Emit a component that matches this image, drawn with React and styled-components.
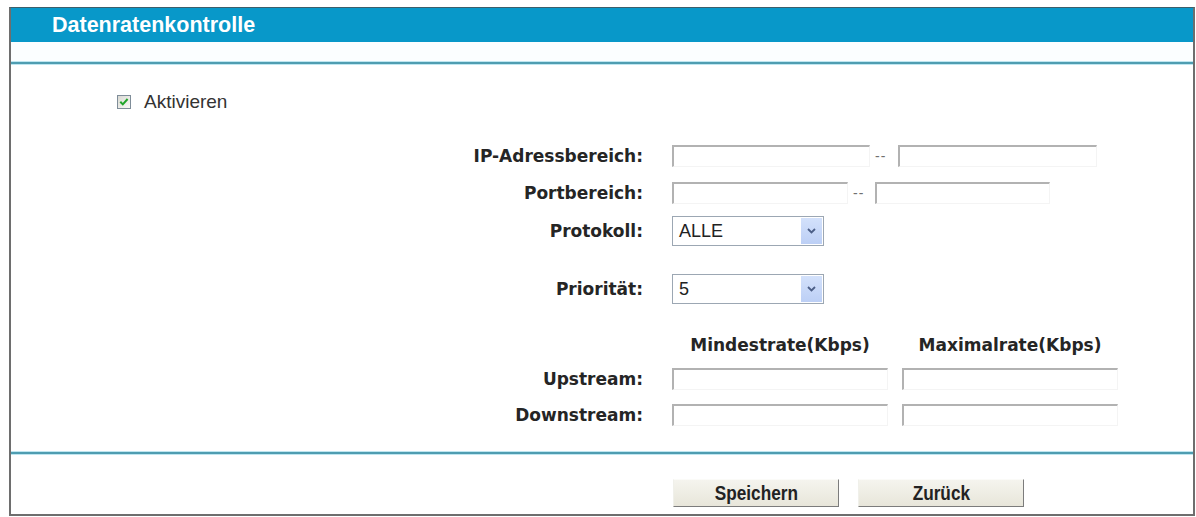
import React from 'react';
import styled, { createGlobalStyle } from 'styled-components';

const GlobalStyle = createGlobalStyle`
  html, body { margin: 0; padding: 0; background: #fff; }
  body { font-family: 'Liberation Sans', Arial, sans-serif; }
`;

const Frame = styled.div`
  box-sizing: border-box;
  width: 1186px;
  height: 509px;
  margin: 7px 0 0 9px;
  border: 2px solid #6e6e6e;
  border-top: 1px solid #3d5f6b;
  display: flex;
  flex-direction: column;
  background: #fff;
`;

const TitleBar = styled.div`
  height: 34px;
  flex-shrink: 0;
  background: #0898c9;
  color: #fff;
  display: flex;
  align-items: center;
  padding-left: 41px;
  font: bold 21.5px 'Liberation Sans', Arial, sans-serif;
`;

const Band = styled.div`
  height: ${p => p.$h || 20}px;
  flex-shrink: 0;
  background: ${p => p.$bg || '#fbfeff'};
`;

// blaue Trennlinie mit hellem Rand
const Rule = styled.div`
  height: 2px;
  flex-shrink: 0;
  background: #4f9db1;
  box-shadow: 0 -1px 0 #bfe6f0, 0 1px 0 #bfe6f0;
`;

const Content = styled.div`
  display: flex;
  flex-direction: column;
  padding-top: 28px;
`;

const CheckRow = styled.label`
  display: flex;
  align-items: center;
  gap: 13px;
  height: 20px;
  padding-left: 106px;
  font-size: 19px;
  color: #333;

  svg { flex-shrink: 0; }
`;

const Row = styled.div`
  display: grid;
  grid-template-columns: 632px 1fr;
  column-gap: 29px;
  align-items: center;
  height: ${p => p.$h || 22}px;
  margin-top: ${p => p.$mt || 0}px;
`;

const Label = styled.div`
  text-align: right;
  font: bold 17px 'DejaVu Sans', Verdana, sans-serif;
  color: #252525;
`;

const Fields = styled.div`
  display: flex;
  align-items: center;
  height: 100%;
`;

const TextInput = styled.input`
  box-sizing: border-box;
  width: ${p => p.$w}px;
  height: 22px;
  margin: 0 ${p => p.$mr || 0}px 0 0;
  padding: 0 4px;
  border-style: solid;
  border-width: 2px 1px 1px 2px;
  border-color: #b2b2b2 #f4f4f4 #f4f4f4 #b2b2b2;
  background: #fff;
  outline: none;
`;

const Dash = styled.span`
  align-self: flex-end;
  margin: 0 ${p => p.$mr}px 3px 5px;
  width: 13px;
  font: 14px 'Liberation Sans', Arial, sans-serif;
  letter-spacing: 1px;
  color: #707070;
`;

const SelectBox = styled.div`
  box-sizing: border-box;
  width: 152px;
  height: 30px;
  display: flex;
  align-items: center;
  border: 1px solid #9ca7b3;
  background: #fff;
  padding-left: 6px;
  font: 18px 'Liberation Sans', Arial, sans-serif;
  color: #222;
`;

const SelectValue = styled.span`
  flex: 1;
`;

const ArrowBox = styled.span`
  width: 21px;
  height: 26px;
  margin: 1px;
  display: flex;
  align-items: center;
  justify-content: center;
  background: linear-gradient(#d3e1fb, #bccff5);
`;

const ColHead = styled.div`
  width: ${p => p.$w}px;
  margin-right: ${p => p.$mr || 0}px;
  text-align: center;
  font: bold 17px 'DejaVu Sans', Verdana, sans-serif;
  color: #252525;
`;

const Footer = styled.div`
  display: flex;
  gap: 19px;
  padding: 25px 0 0 662px;
`;

const Button = styled.button`
  box-sizing: border-box;
  width: 166px;
  height: 28px;
  background: linear-gradient(#f5f4ee, #e8e6da);
  border: 1px solid;
  border-color: #fbfbf8 #7c7c7c #7c7c7c #f0f0ea;
  color: #222;
  padding: 0;
  cursor: pointer;
`;

// schmale Schrift der Schaltflächen
const ButtonText = styled.span`
  display: inline-block;
  font: bold 20px 'Liberation Sans', Arial, sans-serif;
  transform: scaleX(0.86);
`;

const CheckIcon = () => (
  <svg width="14" height="14" viewBox="0 0 14 14">
    <defs>
      <linearGradient id="cbg" x1="0" y1="0" x2="1" y2="1">
        <stop offset="0" stopColor="#d8d8d2" />
        <stop offset="1" stopColor="#fbfbf8" />
      </linearGradient>
    </defs>
    <rect x="0.5" y="0.5" width="13" height="13" fill="url(#cbg)" stroke="#7f8d99" />
    <path d="M3.3 6.8 L5.8 9.4 L10.6 4" fill="none" stroke="#21a52a" strokeWidth="2" />
  </svg>
);

const Chevron = () => (
  <svg width="9" height="6" viewBox="0 0 9 6">
    <path d="M1 1 L4.5 4.5 L8 1" fill="none" stroke="#4c5f87" strokeWidth="1.8" />
  </svg>
);

const Select = ({ value }) => (
  <SelectBox>
    <SelectValue>{value}</SelectValue>
    <ArrowBox><Chevron /></ArrowBox>
  </SelectBox>
);

export default function App() {
  return (
    <>
      <GlobalStyle />
      <Frame>
        <TitleBar>Datenratenkontrolle</TitleBar>
        <Band />
        <Rule />
        <Content>
          <CheckRow>
            <CheckIcon />
            Aktivieren
          </CheckRow>

          <Row $mt={33}>
            <Label>IP-Adressbereich:</Label>
            <Fields>
              <TextInput $w={198} />
              <Dash $mr={10}>--</Dash>
              <TextInput $w={199} />
            </Fields>
          </Row>
          <Row $mt={15}>
            <Label>Portbereich:</Label>
            <Fields>
              <TextInput $w={176} />
              <Dash $mr={9}>--</Dash>
              <TextInput $w={175} />
            </Fields>
          </Row>
          <Row $mt={12} $h={30}>
            <Label>Protokoll:</Label>
            <Fields><Select value="ALLE" /></Fields>
          </Row>
          <Row $mt={28} $h={30}>
            <Label>Priorität:</Label>
            <Fields><Select value="5" /></Fields>
          </Row>
          <Row $mt={31} $h={20}>
            <div />
            <Fields>
              <ColHead $w={216} $mr={14}>Mindestrate(Kbps)</ColHead>
              <ColHead $w={216}>Maximalrate(Kbps)</ColHead>
            </Fields>
          </Row>
          <Row $mt={12} $h={23}>
            <Label>Upstream:</Label>
            <Fields>
              <TextInput $w={216} $mr={14} />
              <TextInput $w={216} />
            </Fields>
          </Row>
          <Row $mt={13} $h={23}>
            <Label>Downstream:</Label>
            <Fields>
              <TextInput $w={216} $mr={14} />
              <TextInput $w={216} />
            </Fields>
          </Row>
        </Content>
        <Band $h={26} $bg="#fff" />
        <Rule />
        <Footer>
          <Button><ButtonText>Speichern</ButtonText></Button>
          <Button><ButtonText>Zurück</ButtonText></Button>
        </Footer>
      </Frame>
    </>
  );
}
